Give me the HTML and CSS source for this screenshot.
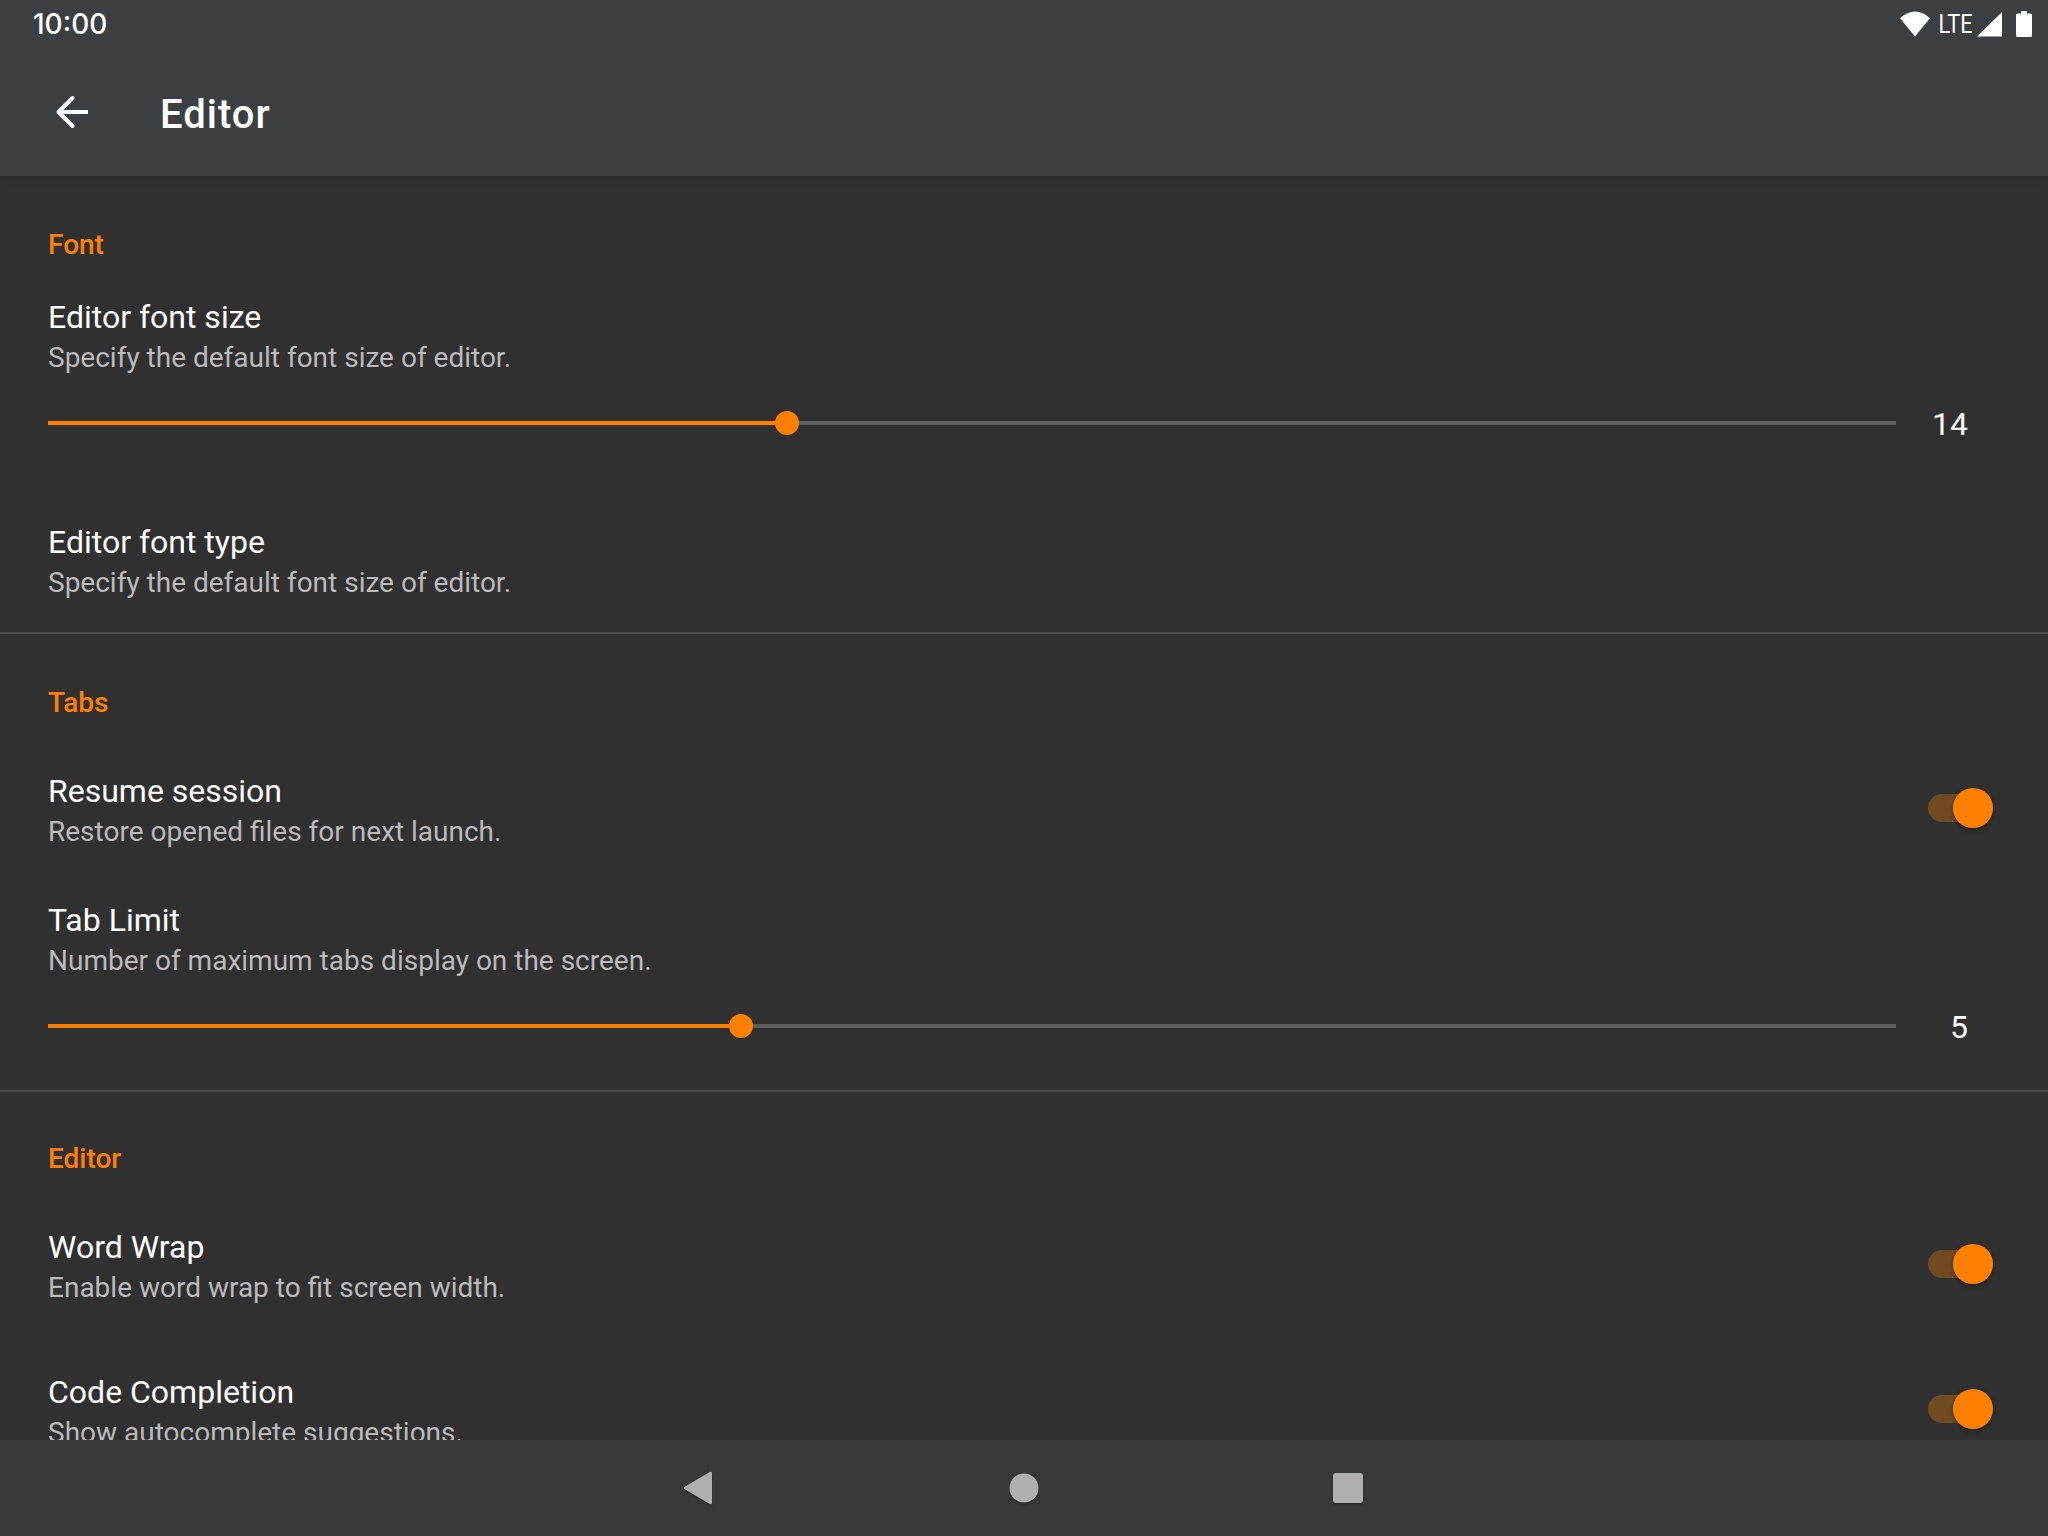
FILE: index.html
```html
<!DOCTYPE html>
<html lang="en">
<head>
<meta charset="utf-8">
<title>Editor</title>
<link rel="stylesheet" href="styles.css">
</head>
<body>
<div class="screen">
  <header class="top">
    <div class="status">
      <span class="clock">10:00</span>
      <svg class="status-icons" width="140" height="48" viewBox="0 0 140 48">
        <path fill="#fff" d="M0 18.200Q15 5 30 18.200L15 36.500Z"/>
        <text class="lte" x="38.500" y="33" textLength="34" lengthAdjust="spacingAndGlyphs">LTE</text>
        <path fill="#fff" d="M102 12V36.500H77Z"/>
        <path fill="#fff" d="M121 11h6v2.500h3.500a1.500 1.500 0 0 1 1.500 1.500v20.500a1.500 1.500 0 0 1-1.500 1.500h-13a1.500 1.500 0 0 1-1.500-1.500v-20.500a1.500 1.500 0 0 1 1.500-1.500h3.500z"/>
      </svg>
    </div>
    <div class="toolbar">
      <svg class="back" width="48" height="48" viewBox="0 0 48 48" fill="none" stroke="#fff" stroke-width="4">
        <path d="M40 24H12"/>
        <path d="M24.500 10L10.500 24L24.500 38" stroke-linecap="round" stroke-linejoin="round"/>
      </svg>
      <h1 class="title">Editor</h1>
    </div>
  </header>
  <main class="content">
    <section class="group">
      <h2 class="category">Font</h2>
      <div class="pref seek">
        <div class="name">Editor font size</div>
        <div class="summary">Specify the default font size of editor.</div>
        <div class="seek-line">
          <div class="track"><div class="fill" style="width:40%"></div><div class="knob"></div></div>
          <span class="value">14</span>
        </div>
      </div>
      <div class="pref">
        <div class="name">Editor font type</div>
        <div class="summary">Specify the default font size of editor.</div>
      </div>
    </section>
    <section class="group divided">
      <h2 class="category">Tabs</h2>
      <div class="pref with-switch">
        <div>
          <div class="name">Resume session</div>
          <div class="summary">Restore opened files for next launch.</div>
        </div>
        <div class="switch"><div class="thumb"></div></div>
      </div>
      <div class="pref seek">
        <div class="name">Tab Limit</div>
        <div class="summary">Number of maximum tabs display on the screen.</div>
        <div class="seek-line">
          <div class="track"><div class="fill" style="width:37.5%"></div><div class="knob"></div></div>
          <span class="value">5</span>
        </div>
      </div>
    </section>
    <section class="group divided compact">
      <h2 class="category">Editor</h2>
      <div class="pref with-switch">
        <div>
          <div class="name">Word Wrap</div>
          <div class="summary">Enable word wrap to fit screen width.</div>
        </div>
        <div class="switch"><div class="thumb"></div></div>
      </div>
      <div class="pref with-switch">
        <div>
          <div class="name">Code Completion</div>
          <div class="summary">Show autocomplete suggestions.</div>
        </div>
        <div class="switch"><div class="thumb"></div></div>
      </div>
    </section>
  </main>
  <nav class="navbar">
    <svg class="nav-icon" width="40" height="40" viewBox="0 0 40 40"><path d="M30.500 5.300V34.700L5.500 20z" fill="#afafaf" stroke="#afafaf" stroke-width="3" stroke-linejoin="round"/></svg>
    <svg class="nav-icon" width="40" height="40" viewBox="0 0 40 40"><circle cx="20" cy="20" r="14.500" fill="#afafaf"/></svg>
    <svg class="nav-icon" width="40" height="40" viewBox="0 0 40 40"><rect x="5" y="5" width="30" height="30" rx="3" fill="#afafaf"/></svg>
  </nav>
</div>
</body>
</html>
```
FILE: styles.css
```css
* { box-sizing: border-box; }

body {
  margin: 0;
  background: #303030;
  color: #fff;
  font-family: Roboto, "Liberation Sans", sans-serif;
}

.screen {
  display: flex;
  flex-direction: column;
  width: 2048px;
  height: 1536px;
  overflow: hidden;
}

.top {
  flex: none;
  height: 176px;
  background: #3c3f41;
  box-shadow: 0 2px 8px rgba(0, 0, 0, .12);
  z-index: 1;
}

.status {
  display: flex;
  justify-content: space-between;
  height: 48px;
  padding: 0 8px 0 33px;
}

.clock {
  font: 500 28px/48px Inter, Roboto, sans-serif;
}

.lte {
  fill: #fff;
  font: 400 25px Roboto, sans-serif;
}

.toolbar {
  display: flex;
  align-items: center;
  gap: 64px;
  height: 128px;
  padding-left: 48px;
}

.title {
  margin: 5px 0 0;
  font-size: 40px;
  font-weight: 500;
  line-height: 47px;
  letter-spacing: 1px;
}

.content {
  flex: 1;
  min-height: 0;
  overflow: hidden;
}

.divided { border-top: 2px solid #494949; }

.category {
  height: 102px;
  margin: 0;
  padding: 52px 48px 0;
  color: #ff8000;
  font-size: 28px;
  font-weight: 500;
  line-height: 33px;
}

.compact .category {
  height: 100px;
  padding-top: 50px;
}

.pref {
  height: 145px;
  padding: 36px 48px 0;
}

.name {
  font-size: 32px;
  line-height: 38px;
}

.summary {
  margin-top: 5px;
  color: #bababa;
  font-size: 28px;
  line-height: 33px;
}

.with-switch {
  display: flex;
  justify-content: space-between;
}

.switch {
  display: flex;
  justify-content: flex-end;
  align-items: center;
  width: 60px;
  height: 28px;
  margin: 22px 12px 0 0;
  border-radius: 14px;
  background: #704a22;
}

.thumb {
  flex: none;
  width: 40px;
  height: 40px;
  margin-right: -5px;
  border-radius: 50%;
  background: #ff8000;
  box-shadow: 0 2px 5px rgba(0, 0, 0, .35);
}

.seek {
  height: 209px;
  padding-top: 20px;
}

.seek-line {
  display: flex;
  align-items: center;
  height: 38px;
  margin-top: 30px;
}

.track {
  display: flex;
  align-items: center;
  width: 1848px;
  height: 4px;
  background: #5e5e5e;
}

.fill {
  height: 4px;
  background: #ff8000;
}

.knob {
  flex: none;
  width: 24px;
  height: 24px;
  margin-left: -12px;
  border-radius: 50%;
  background: #ff8000;
}

.value {
  width: 72px;
  margin-top: 2px;
  font-size: 32px;
  line-height: 38px;
  text-align: right;
}

.navbar {
  flex: none;
  display: flex;
  justify-content: center;
  align-items: center;
  gap: 284px;
  height: 96px;
  background: #373839;
}

.nav-icon { filter: drop-shadow(0 1px 1px rgba(0, 0, 0, .3)); }
```
